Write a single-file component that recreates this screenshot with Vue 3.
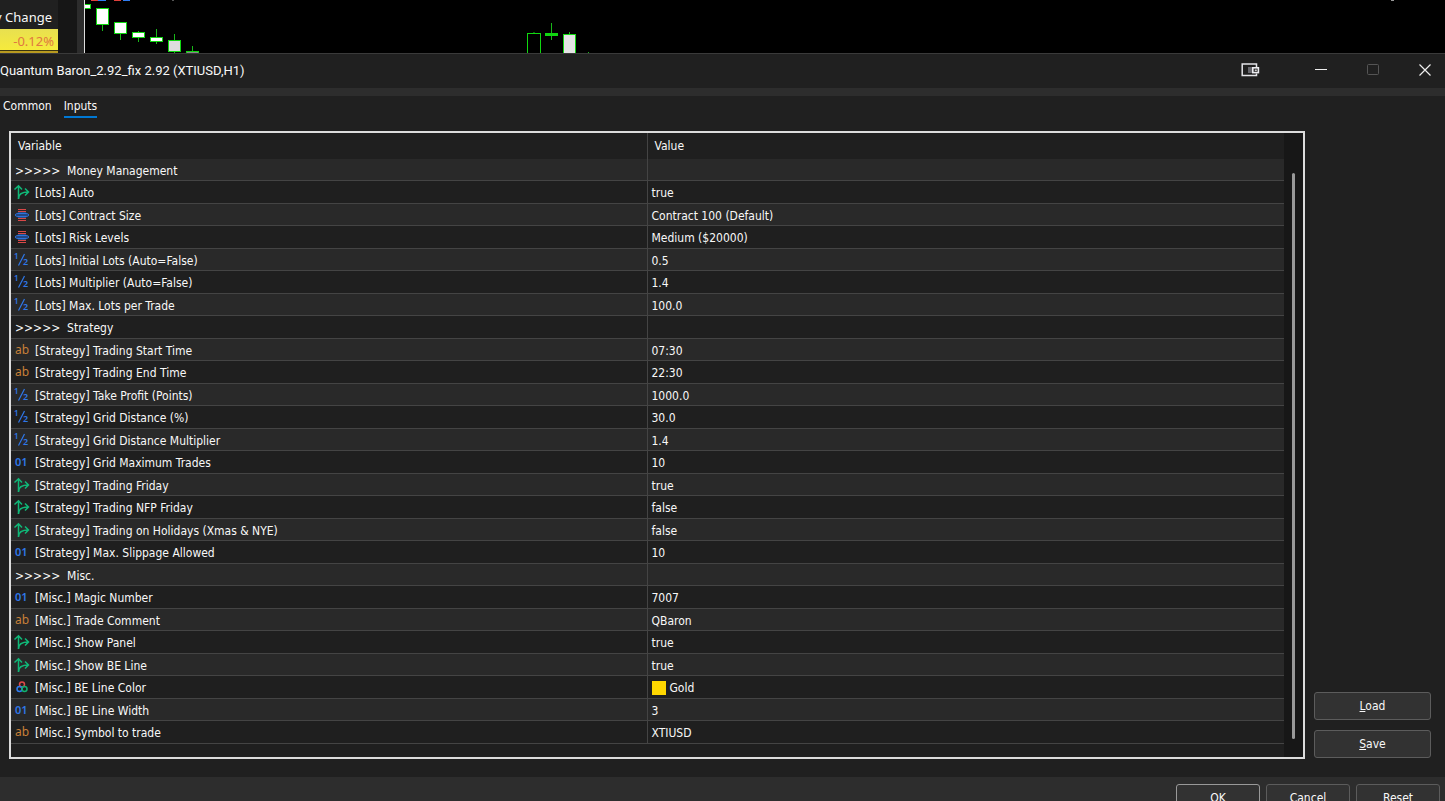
<template>
    <div class="desktop">
        <div class="terminal">
            <div class="watch">
                <div class="watch-head">y Change</div>
                <div class="watch-cell">-0.12%</div>
                <div class="watch-next"></div>
            </div>
            <div class="splitter"></div>
            <div class="chart">
                <svg width="1360" height="53" viewBox="85 0 1360 53">
                    <rect x="91" y="0" width="7" height="1" fill="#e0403c" />
                    <rect x="98" y="0" width="8" height="1" fill="#2f7df0" />
                    <rect x="114" y="0" width="7" height="1" fill="#e0403c" />
                    <rect x="123" y="0" width="7" height="1" fill="#2f7df0" />
                    <rect x="172" y="0" width="2" height="1" fill="#555" />
                    <rect x="1391" y="0" width="3" height="1" fill="#999" />
                    <g v-for="c in candles" :key="c.x">
                        <rect :x="c.x + c.w / 2 - 0.5" :y="c.high" width="1" :height="c.low - c.high" fill="#18b818" />
                        <rect :x="c.x + 0.5" :y="c.top + 0.5" :width="c.w - 1" :height="c.h - 1" :fill="c.fill"
                            stroke="#10d810" />
                    </g>
                </svg>
            </div>
        </div>

        <div class="dialog">
            <div class="titlebar">
                <span class="title">Quantum Baron_2.92_fix 2.92 (XTIUSD,H1)</span>
                <button class="win-btn win-dock" type="button" aria-label="Dock">
                    <svg width="20" height="16" viewBox="0 0 20 16" fill="none">
                        <path d="M15.5 5V2H1.2v11.5h14.3v-2" stroke="#e4e4e8" stroke-width="1.5" />
                        <rect x="7" y="5" width="5" height="6" fill="#66666c" />
                        <rect x="11.8" y="5.8" width="5.6" height="4.8" fill="#222" stroke="#ececf0" stroke-width="1.6" />
                        <rect x="13.8" y="7.5" width="2" height="1.6" fill="#ccc" />
                    </svg>
                </button>
                <button class="win-btn" type="button" aria-label="Minimize">
                    <svg width="12" height="12" viewBox="0 0 12 12">
                        <path d="M0 5.5h12" stroke="#eee" />
                    </svg>
                </button>
                <button class="win-btn" type="button" aria-label="Maximize" disabled>
                    <svg width="12" height="12" viewBox="0 0 12 12">
                        <rect x="0.5" y="0.5" width="11" height="10" rx="1" fill="none" stroke="#555" />
                    </svg>
                </button>
                <button class="win-btn" type="button" aria-label="Close">
                    <svg width="12" height="12" viewBox="0 0 12 12">
                        <path d="M0.5 0.5l11 11M11.5 0.5l-11 11" stroke="#eee" stroke-width="1.2" />
                    </svg>
                </button>
            </div>

            <div class="tabs">
                <button v-for="t in tabs" :key="t" class="tab" :class="{ active: t === activeTab }" type="button"
                    @click="activeTab = t">
                    {{ t }}
                </button>
            </div>

            <div class="content">
                <div class="list">
                    <table class="inputs">
                        <thead>
                            <tr>
                                <th>Variable</th>
                                <th>Value</th>
                            </tr>
                        </thead>
                        <tbody>
                            <tr v-for="(r, i) in rows" :key="i">
                                <td v-if="!r.type">
                                    <div class="cell">&gt;&gt;&gt;&gt;&gt;&nbsp; {{ r.name }}</div>
                                </td>
                                <td v-else>
                                    <div class="cell">
                                        <svg class="icon" width="16" height="16" viewBox="0 0 16 16" fill="none">
                                            <g v-if="r.type === 'bool'" stroke="#10b878" stroke-width="1.5">
                                                <path d="M4.5 14V1M0.5 4.5l4-3.7 3.500 3.700" />
                                                <path d="M4.500 13.500c0-4 2.500-6.500 10-6.500M11 3.500l3.500 3.500-3.500 3.500" />
                                            </g>
                                            <g v-else-if="r.type === 'enum'">
                                                <path d="M4 1.500h8M4 3.500h8M4 10.500h8M4 12.500h8" stroke="#d84848" />
                                                <rect x="3.500" y="4.500" width="9" height="5" rx="1" fill="#2a6ed8" />
                                                <rect x="1.500" y="5.800" width="13" height="2.400" rx="1" fill="#203050"
                                                    stroke="#2f7cf0" />
                                            </g>
                                            <g v-else-if="r.type === 'double'" fill="#2f78e8">
                                                <text class="glyph" x="0" y="6" font-size="8">1</text>
                                                <path d="M10.500 1L4.500 12.500" stroke="#2f78e8" stroke-width="1.200" />
                                                <text class="glyph" x="9" y="12" font-size="9">2</text>
                                            </g>
                                            <text v-else-if="r.type === 'string'" class="thin" x="1" y="11"
                                                font-size="12" fill="#c88038">ab</text>
                                            <text v-else-if="r.type === 'int'" class="glyph" x="1" y="11" font-size="11"
                                                fill="#2f78e8">01</text>
                                            <g v-else stroke-width="1.500">
                                                <circle cx="8" cy="4.500" r="2.500" stroke="#e04848" />
                                                <circle cx="5.500" cy="9" r="2.500" stroke="#2f7cf0" />
                                                <circle cx="10.500" cy="9" r="2.500" stroke="#10b070" />
                                            </g>
                                        </svg>
                                        <span>{{ r.name }}</span>
                                    </div>
                                </td>
                                <td>
                                    <div class="cell value">
                                        <i v-if="r.type === 'color'" class="swatch"></i>
                                        <span>{{ r.value }}</span>
                                    </div>
                                </td>
                            </tr>
                        </tbody>
                    </table>
                    <div class="track">
                        <div class="thumb"></div>
                    </div>
                </div>
                <div class="side">
                    <button class="btn" type="button"><u>L</u>oad</button>
                    <button class="btn" type="button"><u>S</u>ave</button>
                </div>
            </div>

            <div class="footer">
                <button class="btn primary" type="button">OK</button>
                <button class="btn" type="button">Cancel</button>
                <button class="btn" type="button">Reset</button>
            </div>
        </div>
    </div>
</template>

<script setup>

import { ref } from 'vue'

const tabs = ["Common", "Inputs"]
const activeTab = ref("Inputs")

// rows without a type are group headings
const rows = [
    { name: "Money Management" },
    { type: "bool", name: "[Lots] Auto", value: "true" },
    { type: "enum", name: "[Lots] Contract Size", value: "Contract 100 (Default)" },
    { type: "enum", name: "[Lots] Risk Levels", value: "Medium ($20000)" },
    { type: "double", name: "[Lots] Initial Lots (Auto=False)", value: "0.5" },
    { type: "double", name: "[Lots] Multiplier (Auto=False)", value: "1.4" },
    { type: "double", name: "[Lots] Max. Lots per Trade", value: "100.0" },
    { name: "Strategy" },
    { type: "string", name: "[Strategy] Trading Start Time", value: "07:30" },
    { type: "string", name: "[Strategy] Trading End Time", value: "22:30" },
    { type: "double", name: "[Strategy] Take Profit (Points)", value: "1000.0" },
    { type: "double", name: "[Strategy] Grid Distance (%)", value: "30.0" },
    { type: "double", name: "[Strategy] Grid Distance Multiplier", value: "1.4" },
    { type: "int", name: "[Strategy] Grid Maximum Trades", value: "10" },
    { type: "bool", name: "[Strategy] Trading Friday", value: "true" },
    { type: "bool", name: "[Strategy] Trading NFP Friday", value: "false" },
    { type: "bool", name: "[Strategy] Trading on Holidays (Xmas & NYE)", value: "false" },
    { type: "int", name: "[Strategy] Max. Slippage Allowed", value: "10" },
    { name: "Misc." },
    { type: "int", name: "[Misc.] Magic Number", value: "7007" },
    { type: "string", name: "[Misc.] Trade Comment", value: "QBaron" },
    { type: "bool", name: "[Misc.] Show Panel", value: "true" },
    { type: "bool", name: "[Misc.] Show BE Line", value: "true" },
    { type: "color", name: "[Misc.] BE Line Color", value: "Gold" },
    { type: "int", name: "[Misc.] BE Line Width", value: "3" },
    { type: "string", name: "[Misc.] Symbol to trade", value: "XTIUSD" }
]

const candles = [
    { x: 78, w: 13, top: 4, h: 5, high: 4, low: 9, fill: "#fff" },
    { x: 96, w: 13, top: 8, h: 17, high: 8, low: 31, fill: "#fff" },
    { x: 114, w: 13, top: 22, h: 12, high: 22, low: 40, fill: "#fff" },
    { x: 132, w: 13, top: 32, h: 6, high: 31, low: 42, fill: "#fff" },
    { x: 150, w: 13, top: 37, h: 5, high: 29, low: 44, fill: "#fff" },
    { x: 168, w: 13, top: 40, h: 12, high: 34, low: 53, fill: "#ddd" },
    { x: 186, w: 13, top: 51, h: 5, high: 46, low: 53, fill: "#888" },
    { x: 527, w: 14, top: 33, h: 30, high: 32, low: 34, fill: "#000" },
    { x: 545, w: 13, top: 33, h: 3, high: 23, low: 40, fill: "#10d810" },
    { x: 563, w: 13, top: 34, h: 30, high: 32, low: 34, fill: "#e4e4e4" },
    { x: 582, w: 13, top: 53, h: 5, high: 52, low: 53, fill: "#060" }
]

</script>

<style>
body {
    background: #202020;
}
</style>

<style scoped>
.desktop {
    height: 100vh;
    overflow: hidden;
    background: #202020;
    color: #f8f8f8;
    font-family: "DejaVu Sans Condensed", Tahoma, "Noto Sans", sans-serif;
    font-size: 12px;
    line-height: 16px;
}

button {
    font: inherit;
    color: inherit;
    padding: 0;
}

.terminal {
    display: flex;
    height: 53px;
    background: #000;
    overflow: hidden;
}

.watch {
    display: flex;
    flex-direction: column;
    width: 58px;
    padding-right: 19px;
    background: linear-gradient(90deg, #202020 58px, #161616 58px);
    font-family: "Noto Sans", sans-serif;
    font-size: 13px;
}

.watch-head {
    display: flex;
    justify-content: flex-end;
    align-items: center;
    height: 25px;
    padding: 4px 6px 0 0;
    white-space: nowrap;
}

.watch-cell {
    height: 21px;
    padding-right: 4px;
    border-bottom: 1px solid #3a3510;
    background: linear-gradient(#e8e050, #f6ea3c);
    color: #e07840;
    line-height: 24px;
    text-align: right;
}

.watch-next {
    flex: 1;
    background: #b89a20;
}

.splitter {
    width: 7px;
    border-right: 1px solid #ddd;
    background: #2c2c2c;
}

.chart {
    flex: 1;
    overflow: hidden;
}

.chart svg {
    display: block;
}

.dialog {
    border-top: 1px solid #3a3a3a;
}

.titlebar {
    display: flex;
    align-items: center;
    height: 34px;
    border-bottom: 8px solid #2d2d2d;
}

.title {
    flex: 1;
    font-family: Roboto, "Noto Sans", sans-serif;
    font-size: 13px;
}

.win-btn {
    display: flex;
    align-items: center;
    justify-content: center;
    width: 52px;
    height: 32px;
    padding-bottom: 2px;
    border: none;
    background: transparent;
}

.win-btn:last-child {
    margin-right: -6px;
}

.win-dock {
    margin-right: 18px;
}

.tabs {
    display: flex;
    gap: 12px;
    height: 35px;
    padding-left: 3px;
}

.tab {
    height: 22px;
    border: none;
    border-bottom: 2px solid transparent;
    background: transparent;
    cursor: pointer;
}

.tab.active {
    border-color: #0078d4;
}

.content {
    display: flex;
    gap: 9px;
    padding: 0 14px 18px 9px;
}

.list {
    flex: 1;
    display: flex;
    border: 2px solid #dcdcdc;
    background: #1f1f1f;
}

.inputs {
    flex: 1;
    width: 100%;
    table-layout: fixed;
    border-collapse: separate;
    border-spacing: 0;
    margin-bottom: 13px;
}

.inputs th {
    height: 26px;
    padding: 0 7px;
    font-weight: 400;
    text-align: left;
}

.inputs th:first-child,
.inputs td:first-child {
    border-right: 1px solid #444;
}

.inputs td {
    height: 22px;
    padding: 2px 4px 0;
    border-bottom: 1px solid #444;
    box-sizing: border-box;
}

.inputs tbody tr:nth-child(even) td {
    height: 23px;
}

.inputs tbody tr:nth-child(odd) {
    background: #292929;
}

.cell {
    display: flex;
    align-items: center;
    gap: 5px;
    height: 19px;
}

.icon {
    flex: none;
    margin-left: -1px;
    overflow: visible;
}

.glyph {
    font-family: "Noto Sans", sans-serif;
    font-weight: 600;
}

.thin {
    font-family: "Noto Sans", sans-serif;
}

.value {
    gap: 4px;
}

.swatch {
    width: 14px;
    height: 14px;
    background: #ffd700;
}

.track {
    flex: none;
    display: flex;
    justify-content: center;
    width: 19px;
    padding: 40px 0 18px;
    box-sizing: border-box;
    background: #171717;
}

.thumb {
    width: 3px;
    border-radius: 2px;
    background: #999;
}

.side {
    display: flex;
    flex-direction: column;
    justify-content: flex-end;
    gap: 10px;
    width: 117px;
    padding-bottom: 1px;
}

.btn {
    height: 28px;
    border: 1px solid #5c5c5c;
    border-radius: 3px;
    background: #323232;
    cursor: pointer;
}

.btn.primary {
    border-color: #999;
}

.footer {
    display: flex;
    justify-content: flex-end;
    gap: 6px;
    padding: 7px 5px;
    background: #2d2d2d;
}

.footer .btn {
    width: 84px;
}
</style>
